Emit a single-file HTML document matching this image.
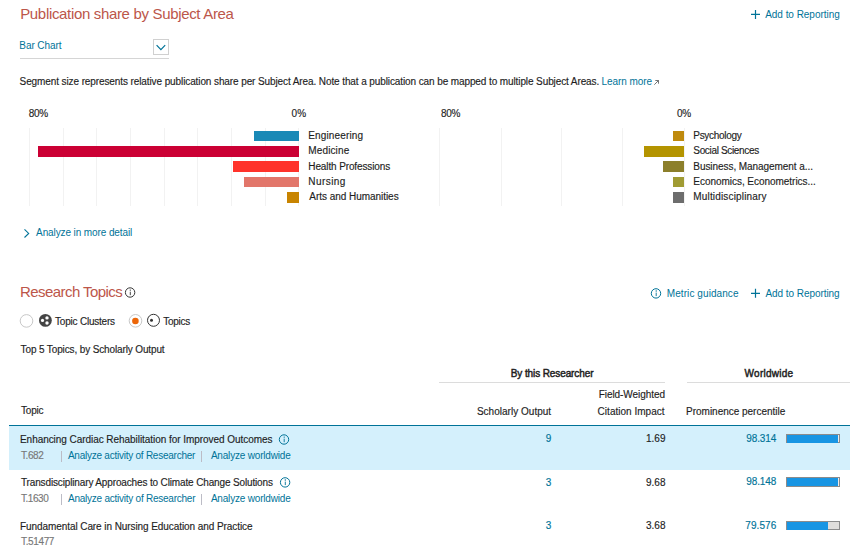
<!DOCTYPE html>
<html><head><meta charset="utf-8"><title>Publication share</title><style>
*{margin:0;padding:0;box-sizing:border-box}
html,body{width:862px;height:556px;overflow:hidden;background:#fff}
body{position:relative;font-family:"Liberation Sans",sans-serif;color:#2e2e2e}
.t{position:absolute;white-space:nowrap;font-family:"Liberation Sans",sans-serif;-webkit-text-stroke:0.15px currentColor}
.b{position:absolute}
svg{position:absolute;overflow:visible}
</style></head><body>
<div class="b" style="left:9px;top:425px;width:841px;height:45px;background:#d4f0fc;border-top:1px solid #007398"></div>
<div class="b" style="left:153px;top:39px;width:16px;height:16px;border:1px solid #d0d0d0"></div>
<div class="b" style="left:20px;top:58px;width:149px;height:1px;background:#d5d5d5"></div>
<div class="b" style="left:28.8px;top:128px;width:1px;height:78px;background:#f2f2f2"></div>
<div class="b" style="left:62.5px;top:128px;width:1px;height:78px;background:#f2f2f2"></div>
<div class="b" style="left:96.2px;top:128px;width:1px;height:78px;background:#f2f2f2"></div>
<div class="b" style="left:129.9px;top:128px;width:1px;height:78px;background:#f2f2f2"></div>
<div class="b" style="left:163.6px;top:128px;width:1px;height:78px;background:#f2f2f2"></div>
<div class="b" style="left:197.2px;top:128px;width:1px;height:78px;background:#f2f2f2"></div>
<div class="b" style="left:230.9px;top:128px;width:1px;height:78px;background:#f2f2f2"></div>
<div class="b" style="left:264.6px;top:128px;width:1px;height:78px;background:#f2f2f2"></div>
<div class="b" style="left:298.3px;top:128px;width:1px;height:78px;background:#f2f2f2"></div>
<div class="b" style="left:439.2px;top:128px;width:1px;height:78px;background:#f2f2f2"></div>
<div class="b" style="left:500.6px;top:128px;width:1px;height:78px;background:#f2f2f2"></div>
<div class="b" style="left:561.0px;top:128px;width:1px;height:78px;background:#f2f2f2"></div>
<div class="b" style="left:622.4px;top:128px;width:1px;height:78px;background:#f2f2f2"></div>
<div class="b" style="left:683.5px;top:128px;width:1px;height:78px;background:#f2f2f2"></div>
<div class="b" style="left:254.4px;top:130.5px;width:44.4px;height:10.7px;background:#1a89b6"></div>
<div class="b" style="left:38.0px;top:145.9px;width:260.8px;height:10.7px;background:#cb0034"></div>
<div class="b" style="left:233.3px;top:161.3px;width:65.5px;height:10.7px;background:#ff332b"></div>
<div class="b" style="left:244.1px;top:176.7px;width:54.7px;height:10.7px;background:#e2766a"></div>
<div class="b" style="left:287.1px;top:192.1px;width:11.7px;height:10.7px;background:#c88400"></div>
<div class="b" style="left:673.1px;top:130.5px;width:10.9px;height:10.7px;background:#bf8a0d"></div>
<div class="b" style="left:644.0px;top:145.9px;width:40.0px;height:10.7px;background:#b49400"></div>
<div class="b" style="left:662.9px;top:161.3px;width:21.1px;height:10.7px;background:#8c7f2b"></div>
<div class="b" style="left:673.1px;top:176.7px;width:10.9px;height:10.7px;background:#a09b33"></div>
<div class="b" style="left:673.1px;top:192.1px;width:10.9px;height:10.7px;background:#6d6d6d"></div>
<div class="b" style="left:439px;top:382px;width:226px;height:1px;background:#dcdcdc"></div>
<div class="b" style="left:687px;top:382px;width:163px;height:1px;background:#dcdcdc"></div>
<div class="b" style="left:61px;top:451px;width:1px;height:11px;background:#bcbcc6"></div>
<div class="b" style="left:201px;top:451px;width:1px;height:11px;background:#bcbcc6"></div>
<div class="b" style="left:61px;top:494px;width:1px;height:11px;background:#bcbcc6"></div>
<div class="b" style="left:201px;top:494px;width:1px;height:11px;background:#bcbcc6"></div>
<div class="b" style="left:786px;top:434px;width:54px;height:9px;border:1px solid #8c8c8c;background:#f1ece9"></div>
<div class="b" style="left:787px;top:435px;width:51.12px;height:8px;background:#1895e3"></div>
<div class="b" style="left:786px;top:477px;width:54px;height:10px;border:1px solid #8c8c8c;background:#f1ece9"></div>
<div class="b" style="left:787px;top:478px;width:51.04px;height:8px;background:#1895e3"></div>
<div class="b" style="left:786px;top:521px;width:54px;height:9px;border:1px solid #8c8c8c;background:#e0dedc"></div>
<div class="b" style="left:787px;top:522px;width:41.38px;height:8px;background:#1895e3"></div>
<div class="t" style="left:20.2px;top:6.0px;font-size:15px;line-height:15px;font-weight:400;letter-spacing:-0.331px;color:#bc564a;-webkit-text-stroke:0">Publication share by Subject Area</div>
<div class="t" style="left:765.2px;top:10.0px;font-size:10px;line-height:10px;font-weight:400;letter-spacing:-0.033px;color:#007398;-webkit-text-stroke:0">Add to Reporting</div>
<div class="t" style="left:19.3px;top:41.0px;font-size:10px;line-height:10px;font-weight:400;letter-spacing:-0.075px;color:#007398;-webkit-text-stroke:0">Bar Chart</div>
<div class="t" style="left:19.6px;top:77.0px;font-size:10px;line-height:10px;font-weight:400;letter-spacing:-0.102px;color:#1e1e1e">Segment size represents relative publication share per Subject Area. Note that a publication can be mapped to multiple Subject Areas.</div>
<div class="t" style="left:601.5px;top:77.0px;font-size:10px;line-height:10px;font-weight:400;letter-spacing:-0.056px;color:#007398;-webkit-text-stroke:0">Learn more</div>
<div class="t" style="left:28.7px;top:109.0px;font-size:10px;line-height:10px;font-weight:400;letter-spacing:-0.3px;color:#1e1e1e">80%</div>
<div class="t" style="left:291.5px;top:109.0px;font-size:10px;line-height:10px;font-weight:400;letter-spacing:0.2px;color:#1e1e1e">0%</div>
<div class="t" style="left:441.0px;top:109.0px;font-size:10px;line-height:10px;font-weight:400;letter-spacing:-0.25px;color:#1e1e1e">80%</div>
<div class="t" style="left:676.9px;top:109.0px;font-size:10px;line-height:10px;font-weight:400;letter-spacing:-0.1px;color:#1e1e1e">0%</div>
<div class="t" style="left:308.3px;top:131.0px;font-size:10px;line-height:10px;font-weight:400;letter-spacing:0.14px;color:#1e1e1e">Engineering</div>
<div class="t" style="left:308.3px;top:146.0px;font-size:10px;line-height:10px;font-weight:400;letter-spacing:0.129px;color:#1e1e1e">Medicine</div>
<div class="t" style="left:308.3px;top:162.3px;font-size:10px;line-height:10px;font-weight:400;letter-spacing:-0.118px;color:#1e1e1e">Health Professions</div>
<div class="t" style="left:308.3px;top:177.0px;font-size:10px;line-height:10px;font-weight:400;letter-spacing:0.433px;color:#1e1e1e">Nursing</div>
<div class="t" style="left:309.3px;top:192.0px;font-size:10px;line-height:10px;font-weight:400;letter-spacing:-0.039px;color:#1e1e1e">Arts and Humanities</div>
<div class="t" style="left:693.3px;top:131.0px;font-size:10px;line-height:10px;font-weight:400;letter-spacing:-0.3px;color:#1e1e1e">Psychology</div>
<div class="t" style="left:693.3px;top:146.0px;font-size:10px;line-height:10px;font-weight:400;letter-spacing:-0.336px;color:#1e1e1e">Social Sciences</div>
<div class="t" style="left:693.3px;top:162.3px;font-size:10px;line-height:10px;font-weight:400;letter-spacing:-0.062px;color:#1e1e1e">Business, Management a...</div>
<div class="t" style="left:693.3px;top:177.0px;font-size:10px;line-height:10px;font-weight:400;letter-spacing:-0.036px;color:#1e1e1e">Economics, Econometrics...</div>
<div class="t" style="left:693.3px;top:192.0px;font-size:10px;line-height:10px;font-weight:400;letter-spacing:0.163px;color:#1e1e1e">Multidisciplinary</div>
<div class="t" style="left:36.1px;top:228.0px;font-size:10px;line-height:10px;font-weight:400;letter-spacing:-0.105px;color:#007398;-webkit-text-stroke:0">Analyze in more detail</div>
<div class="t" style="left:20.0px;top:284.0px;font-size:15px;line-height:15px;font-weight:400;letter-spacing:-0.564px;color:#bc564a;-webkit-text-stroke:0">Research Topics</div>
<div class="t" style="left:666.8px;top:289.0px;font-size:10px;line-height:10px;font-weight:400;letter-spacing:0.079px;color:#007398;-webkit-text-stroke:0">Metric guidance</div>
<div class="t" style="left:765.4px;top:289.0px;font-size:10px;line-height:10px;font-weight:400;letter-spacing:-0.053px;color:#007398;-webkit-text-stroke:0">Add to Reporting</div>
<div class="t" style="left:55.0px;top:317.0px;font-size:10px;line-height:10px;font-weight:400;letter-spacing:-0.208px;color:#1e1e1e">Topic Clusters</div>
<div class="t" style="left:163.2px;top:317.0px;font-size:10px;line-height:10px;font-weight:400;letter-spacing:-0.24px;color:#1e1e1e">Topics</div>
<div class="t" style="left:20.6px;top:344.5px;font-size:10px;line-height:10px;font-weight:400;letter-spacing:-0.131px;color:#1e1e1e">Top 5 Topics, by Scholarly Output</div>
<div class="t" style="left:510.8px;top:368.5px;font-size:10px;line-height:10px;font-weight:400;letter-spacing:-0.106px;color:#1e1e1e;-webkit-text-stroke:0.45px currentColor">By this Researcher</div>
<div class="t" style="left:744.6px;top:368.5px;font-size:10px;line-height:10px;font-weight:400;letter-spacing:0.237px;color:#1e1e1e;-webkit-text-stroke:0.45px currentColor">Worldwide</div>
<div class="t" style="left:598.7px;top:390.3px;font-size:10px;line-height:10px;font-weight:400;letter-spacing:-0.062px;color:#1e1e1e">Field-Weighted</div>
<div class="t" style="left:597.6px;top:406.5px;font-size:10px;line-height:10px;font-weight:400;letter-spacing:0.021px;color:#1e1e1e">Citation Impact</div>
<div class="t" style="left:476.9px;top:406.5px;font-size:10px;line-height:10px;font-weight:400;letter-spacing:0.02px;color:#1e1e1e">Scholarly Output</div>
<div class="t" style="left:686.1px;top:406.6px;font-size:10px;line-height:10px;font-weight:400;letter-spacing:-0.02px;color:#1e1e1e">Prominence percentile</div>
<div class="t" style="left:21.0px;top:406.0px;font-size:10px;line-height:10px;font-weight:400;letter-spacing:-0.2px;color:#1e1e1e">Topic</div>
<div class="t" style="left:20.0px;top:435.0px;font-size:10px;line-height:10px;font-weight:400;letter-spacing:-0.051px;color:#1e1e1e">Enhancing Cardiac Rehabilitation for Improved Outcomes</div>
<div class="t" style="left:21.0px;top:450.7px;font-size:10px;line-height:10px;font-weight:400;letter-spacing:-0.425px;color:#787878">T.682</div>
<div class="t" style="left:67.9px;top:450.7px;font-size:10px;line-height:10px;font-weight:400;letter-spacing:-0.241px;color:#007398;-webkit-text-stroke:0">Analyze activity of Researcher</div>
<div class="t" style="left:210.9px;top:450.7px;font-size:10px;line-height:10px;font-weight:400;letter-spacing:-0.188px;color:#007398;-webkit-text-stroke:0">Analyze worldwide</div>
<div class="t" style="left:545.7px;top:434.3px;font-size:10px;line-height:10px;font-weight:400;letter-spacing:0.0px;color:#007398">9</div>
<div class="t" style="left:646.0px;top:434.3px;font-size:10px;line-height:10px;font-weight:400;letter-spacing:0.0px;color:#1e1e1e">1.69</div>
<div class="t" style="left:746.3px;top:434.1px;font-size:10px;line-height:10px;font-weight:400;letter-spacing:-0.12px;color:#007398">98.314</div>
<div class="t" style="left:21.0px;top:478.0px;font-size:10px;line-height:10px;font-weight:400;letter-spacing:-0.142px;color:#1e1e1e">Transdisciplinary Approaches to Climate Change Solutions</div>
<div class="t" style="left:21.0px;top:493.7px;font-size:10px;line-height:10px;font-weight:400;letter-spacing:-0.46px;color:#787878">T.1630</div>
<div class="t" style="left:68.0px;top:493.7px;font-size:10px;line-height:10px;font-weight:400;letter-spacing:-0.241px;color:#007398;-webkit-text-stroke:0">Analyze activity of Researcher</div>
<div class="t" style="left:210.9px;top:493.7px;font-size:10px;line-height:10px;font-weight:400;letter-spacing:-0.188px;color:#007398;-webkit-text-stroke:0">Analyze worldwide</div>
<div class="t" style="left:545.7px;top:477.6px;font-size:10px;line-height:10px;font-weight:400;letter-spacing:0.0px;color:#007398">3</div>
<div class="t" style="left:646.0px;top:477.6px;font-size:10px;line-height:10px;font-weight:400;letter-spacing:0.0px;color:#1e1e1e">9.68</div>
<div class="t" style="left:746.3px;top:476.9px;font-size:10px;line-height:10px;font-weight:400;letter-spacing:-0.12px;color:#007398">98.148</div>
<div class="t" style="left:20.0px;top:522.0px;font-size:10px;line-height:10px;font-weight:400;letter-spacing:-0.076px;color:#1e1e1e">Fundamental Care in Nursing Education and Practice</div>
<div class="t" style="left:21.0px;top:536.7px;font-size:10px;line-height:10px;font-weight:400;letter-spacing:-0.367px;color:#787878">T.51477</div>
<div class="t" style="left:545.7px;top:521.4px;font-size:10px;line-height:10px;font-weight:400;letter-spacing:0.0px;color:#007398">3</div>
<div class="t" style="left:646.0px;top:521.4px;font-size:10px;line-height:10px;font-weight:400;letter-spacing:0.0px;color:#1e1e1e">3.68</div>
<div class="t" style="left:745.3px;top:520.9px;font-size:10px;line-height:10px;font-weight:400;letter-spacing:0.08px;color:#007398">79.576</div>
<svg width="862" height="556" style="left:0;top:0" viewBox="0 0 862 556"><path d="M751 14.4H760M755.5 9.9V18.9" stroke="#007398" stroke-width="1.2" fill="none"/><path d="M751 293.3H760M755.5 288.8V297.8" stroke="#007398" stroke-width="1.2" fill="none"/><path d="M156.6 45.1L160.9 49.6L165.2 45.1" stroke="#007398" stroke-width="1.2" fill="none"/><path d="M654.3 84.7L658.5 80.5M655.3 80.5H658.5V83.7" stroke="#505050" stroke-width="0.8" fill="none"/><path d="M24.5 229.3L28.7 233.4L24.5 237.5" stroke="#007398" stroke-width="1.1" fill="none"/><circle cx="130.1" cy="292.5" r="4.7" stroke="#333" stroke-width="1.0" fill="none"/><circle cx="130.29999999999998" cy="290.1" r="0.7" fill="#333"/><path d="M130.29999999999998 291.7V295.2" stroke="#333" stroke-width="0.9" fill="none"/><circle cx="656" cy="293.4" r="4.7" stroke="#007398" stroke-width="1.0" fill="none"/><circle cx="656.2" cy="291.0" r="0.7" fill="#007398"/><path d="M656.2 292.59999999999997V296.09999999999997" stroke="#007398" stroke-width="0.9" fill="none"/><circle cx="284" cy="439.5" r="4.7" stroke="#007398" stroke-width="1.0" fill="none"/><circle cx="284.2" cy="437.1" r="0.7" fill="#007398"/><path d="M284.2 438.7V442.2" stroke="#007398" stroke-width="0.9" fill="none"/><circle cx="285.1" cy="482.4" r="4.7" stroke="#007398" stroke-width="1.0" fill="none"/><circle cx="285.3" cy="480.0" r="0.7" fill="#007398"/><path d="M285.3 481.59999999999997V485.09999999999997" stroke="#007398" stroke-width="0.9" fill="none"/><circle cx="26.5" cy="320.9" r="6.3" stroke="#c8c8c8" stroke-width="1" fill="#fff"/><circle cx="135.5" cy="320.8" r="6.3" stroke="#c8c8c8" stroke-width="1" fill="#fff"/><circle cx="135.4" cy="321" r="3.3" fill="#ec6608"/><circle cx="45.4" cy="320.4" r="6.4" fill="#444"/><circle cx="42.5" cy="320.4" r="1.6" fill="#fff"/><circle cx="47.0" cy="317.9" r="1.7" fill="#fff"/><circle cx="47.0" cy="323.0" r="1.7" fill="#fff"/><circle cx="153.5" cy="320.3" r="6" stroke="#333" stroke-width="1" fill="none"/><circle cx="151.5" cy="320.3" r="1.5" fill="#333"/></svg>
</body></html>
